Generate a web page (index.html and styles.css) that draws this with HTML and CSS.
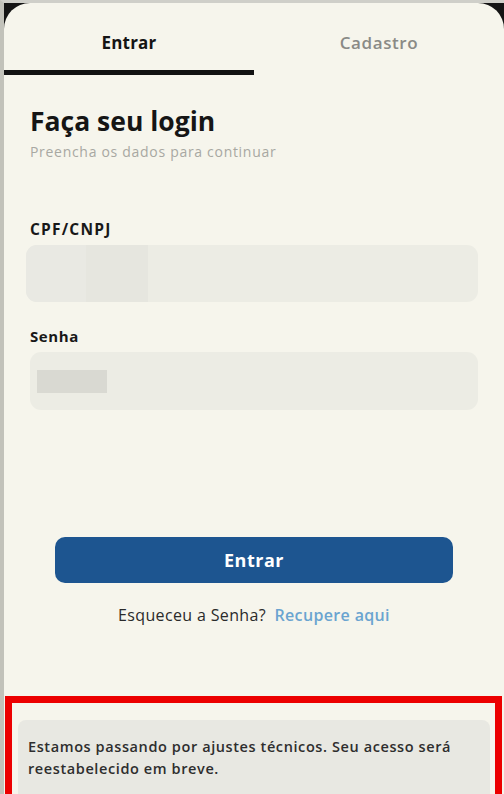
FILE: index.html
```html
<!DOCTYPE html>
<html lang="pt-BR">
<head>
<meta charset="utf-8">
<title>Login</title>
<link rel="stylesheet" href="styles.css">
</head>
<body>
<div class="frame">
  <div class="sheet">
    <nav class="tabs">
      <div class="tab active">Entrar</div>
      <div class="tab">Cadastro</div>
    </nav>
    <main class="content">
      <h1 class="title">Faça seu login</h1>
      <p class="subtitle">Preencha os dados para continuar</p>
      <label class="label label-cpf">CPF/CNPJ</label>
      <div class="input input-cpf">
        <span class="blur blur-a"></span>
        <span class="blur blur-b"></span>
      </div>
      <label class="label label-pass">Senha</label>
      <div class="input input-pass">
        <span class="mask"></span>
      </div>
      <button class="btn">Entrar</button>
      <p class="forgot">Esqueceu a Senha? <a class="link">Recupere aqui</a></p>
    </main>
    <section class="alert-box">
      <div class="notice">Estamos passando por ajustes técnicos. Seu acesso será reestabelecido em breve.</div>
    </section>
  </div>
</div>
</body>
</html>
```

FILE: styles.css
```css
* { box-sizing: border-box; }
html, body { margin: 0; padding: 0; }
body {
  background: #161616;
  font-family: "Open Sans", "Liberation Sans", sans-serif;
  width: 504px;
  height: 794px;
  overflow: hidden;
}
.frame {
  height: 794px;
  border-top: 3px solid #cfcfc9;
  border-left: 4px solid #c2c2ba;
  background: #141414;
}
.sheet {
  height: 791px;
  background: #f6f5ec;
  border-radius: 26px 26px 0 0;
  display: flex;
  flex-direction: column;
  overflow: hidden;
}
.tabs {
  display: grid;
  grid-template-columns: 250px 250px;
}
.tab {
  text-align: center;
  font-size: 17px;
  line-height: 26px;
  padding: 27px 0 14px;
  border-bottom: 5px solid transparent;
  font-weight: 600;
  color: #8a8a86;
  letter-spacing: 0.6px;
}
.tab.active {
  color: #141414;
  font-weight: 700;
  letter-spacing: 0.2px;
  border-bottom-color: #121212;
}
.content {
  padding: 0 26px;
  display: flex;
  flex-direction: column;
}
.title {
  margin: 30px 0 0;
  font-size: 26.5px;
  line-height: 32px;
  font-weight: 700;
  color: #151515;
}
.subtitle {
  margin: 5px 0 0;
  font-size: 14px;
  line-height: 20px;
  color: #a8a8a2;
  letter-spacing: 0.7px;
}
.label {
  font-size: 15px;
  line-height: 20px;
  font-weight: 700;
  color: #181818;
}
.label-cpf { margin-top: 57px; font-size: 15.5px; letter-spacing: 1.2px; }
.label-pass { margin-top: 24px; letter-spacing: 0.6px; }
.input {
  margin-top: 6px;
  background: #ecece4;
  border-radius: 11px;
  position: relative;
  overflow: hidden;
}
.input-cpf {
  height: 57px;
  margin-left: -4px;
  width: 452px;
  display: flex;
}
.blur { display: block; height: 100%; }
.blur-a { width: 60px; background: #e9e9e3; }
.blur-b { width: 62px; background: #e6e6df; }
.input-pass {
  height: 58px;
  width: 448px;
  display: flex;
  align-items: center;
  padding-left: 7px;
}
.mask {
  display: block;
  width: 70px;
  height: 23px;
  background: #d9d9d2;
}
.btn {
  margin: 127px 0 0 25px;
  width: 398px;
  height: 46px;
  border: none;
  border-radius: 10px;
  background: #1d5590;
  color: #fff;
  font-family: inherit;
  font-size: 18px;
  font-weight: 700;
  letter-spacing: 0.5px;
}
.forgot {
  margin: 22px 0 0;
  text-align: center;
  font-size: 16px;
  line-height: 20px;
  color: #2a2a2a;
  letter-spacing: 0.35px;
}
.link {
  color: #6aa4d0;
  font-weight: 600;
  margin-left: 4px;
}
.alert-box {
  margin: 71px 0 0 1px;
  width: 497px;
  flex: 1;
  border: 7px solid #ec0000;
  border-bottom: none;
  padding: 17px 5px 0 6px;
}
.notice {
  height: 100%;
  background: #e8e8e2;
  border-radius: 8px 8px 0 0;
  padding: 16px 10px 0;
  font-size: 14.5px;
  line-height: 22px;
  font-weight: 600;
  color: #2e2e2e;
  letter-spacing: 0.6px;
}
```
